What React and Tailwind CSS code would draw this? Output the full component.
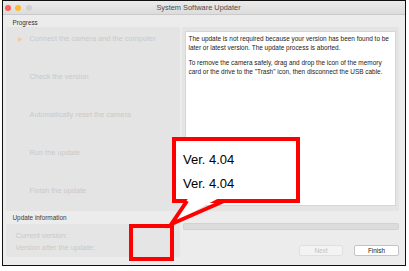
import React from "react";

const font = { fontFamily: '"Liberation Sans", Arial, Helvetica, sans-serif' };

export default function App() {
  const steps = [
    "Connect the camera and the computer",
    "Check the version",
    "Automatically reset the camera",
    "Run the update",
    "Finish the update",
  ];
  return (
    <div className="relative w-[409px] h-[271px] bg-white overflow-hidden" style={font}>
      <div className="ml-[2px] w-[404px] h-[266px] border-[1.5px] border-[#111] bg-[#ececec] flex flex-col">
        {/* title bar */}
        <div className="relative h-[14px] shrink-0 bg-gradient-to-b from-[#ebebeb] to-[#dcdcdc] border-b border-[#cacaca] flex items-center justify-center">
          <div className="absolute left-[1.5px] top-[4px] flex gap-[4.5px]">
            <span className="block w-[6px] h-[6px] rounded-full bg-[#fd5e57]" />
            <span className="block w-[6px] h-[6px] rounded-full bg-[#fdbb2e]" />
            <span className="block w-[6px] h-[6px] rounded-full bg-[#d1d1d1]" />
          </div>
          <span className="text-[7.4px] leading-none text-[#4b4b4b] pr-[11px]">System Software Updater</span>
        </div>
        {/* body */}
        <div className="flex-1 pl-[2.5px] pr-[6px] flex flex-col">
          <div className="h-[12px] flex items-end pl-[7px] pb-[1px]">
            <span className="text-[6.3px] leading-none text-[#333]">Progress</span>
          </div>
          <div className="flex gap-[2px] h-[184px]">
            <div className="w-[174px] h-full bg-[#e4e4e4] rounded-[2px] flex flex-col gap-[28px] pt-[7px]">
              {steps.map((s, i) => (
                <div key={s} className="h-[10px] flex items-center">
                  <div className="w-[24px] flex justify-end pr-[8px]">
                    {i === 0 && (
                      <svg width="4" height="5" viewBox="0 0 4 5">
                        <path d="M0 0 L4 2.5 L0 5 Z" fill="#f6c794" />
                      </svg>
                    )}
                  </div>
                  <span className="text-[7.4px] leading-none text-[#c9c9c9] whitespace-nowrap">{s}</span>
                </div>
              ))}
            </div>
            <div className="flex-1 h-full bg-[#e4e4e4] rounded-[2px] pt-[4px] pb-[5px] px-[3px]">
              <div className="w-full h-full bg-white border border-[#d6d6d6] pl-[3px] pt-[1.5px] text-[6.45px] leading-[9px] text-[#1a1a1a] whitespace-nowrap">
                <div>The update is not required because your version has been found to be</div>
                <div>later or latest version. The update process is aborted.</div>
                <div className="h-[6px]" />
                <div>To remove the camera safely, drag and drop the icon of the memory</div>
                <div>card or the drive to the "Trash" icon, then disconnect the USB cable.</div>
              </div>
            </div>
          </div>
          <div className="h-[12px] flex items-center pl-[7px] pt-[3px]">
            <span className="text-[6.4px] leading-none text-[#3a3a3a] font-medium">Update information</span>
          </div>
          <div className="flex gap-[3px] h-[34px]">
            <div className="w-[174px] h-[33px] mt-[1px] bg-[#e5e5e5] rounded-[2px] pl-[10px] pt-[6px] flex flex-col">
              <span className="h-[12px] leading-[12px] text-[7.3px] text-[#c9c9c9]">Current version:</span>
              <span className="h-[12px] leading-[12px] text-[7.3px] text-[#c9c9c9]">Version after the update:</span>
            </div>
            <div className="flex-1 flex flex-col">
              <div className="h-[6.5px] w-full bg-[#dcdcdc] border border-[#d2d2d2] rounded-[1.5px]" />
              <div className="flex justify-end gap-[11px] mt-[15.5px]">
                <div className="w-[44px] h-[11px] rounded-[2px] bg-[#f3f3f3] border border-[#e0e0e0] flex items-center justify-center text-[6.4px] text-[#c2c2c2]">Next</div>
                <div className="w-[45px] h-[11px] rounded-[2px] bg-white border border-[#c4c4c4] flex items-center justify-center text-[6.4px] text-[#222]">Finish</div>
              </div>
            </div>
          </div>
        </div>
      </div>

      {/* callout overlay */}
      <div className="absolute left-[172px] top-[137px] w-[128px] h-[66px] border-[4px] border-[#ff0000] bg-white flex flex-col pl-[7px] pt-[12px] gap-[10px]">
        <span className="text-[13px] leading-[14px] text-black">Ver. 4.04</span>
        <span className="text-[13px] leading-[14px] text-black">Ver. 4.04</span>
      </div>
      <div className="absolute left-[129px] top-[224px] w-[45px] h-[37px] border-[4px] border-[#ff0000]" />
      <svg className="absolute left-0 top-0 pointer-events-none" width="409" height="271" viewBox="0 0 409 271">
        <polygon points="189,197 221,197 172,223" fill="white" />
        <polyline points="187,201 171.5,224 224,201" fill="none" stroke="#ff0000" strokeWidth="4" strokeLinejoin="miter" />
      </svg>
    </div>
  );
}
